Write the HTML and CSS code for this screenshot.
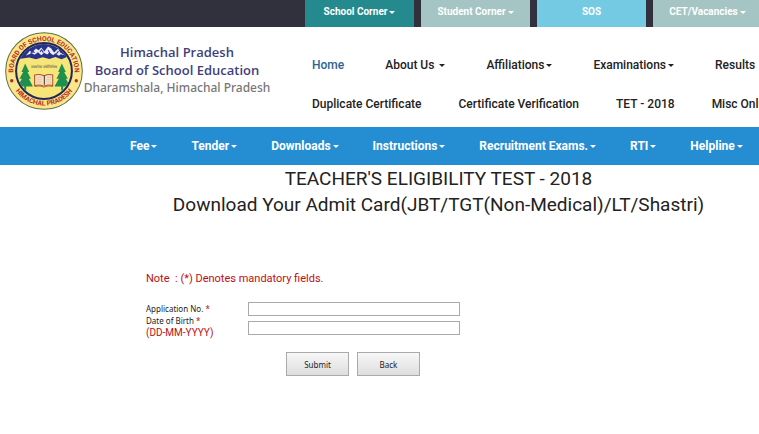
FILE: index.html
```
<!DOCTYPE html>
<html lang="en">
<head>
<meta charset="utf-8">
<title>Himachal Pradesh Board of School Education</title>
<link rel="stylesheet" href="styles.css">
</head>
<body>
<div class="topbar">
<a href="#" class="tab teal">School Corner<span class="caret"></span></a>
<a href="#" class="tab sage">Student Corner<span class="caret"></span></a>
<a href="#" class="tab sky">SOS</a>
<a href="#" class="tab sage">CET/Vacancies<span class="caret"></span></a>
</div>

<header class="header">
<a href="#" class="brand">
<svg class="logo" viewBox="0 0 232 232" role="img" aria-label="Board logo">
<defs>
<path id="arctop" d="M31 150 A91 91 0 1 1 201 150"/>
<path id="arcbottom" d="M12 128 A105 105 0 0 0 220 128"/>
<clipPath id="inner"><circle cx="116" cy="116" r="80"/></clipPath>
</defs>
<circle cx="116" cy="116" r="114" fill="#fbe68a" stroke="#5f7043" stroke-width="3"/>
<circle cx="116" cy="116" r="83" fill="#f6e678" stroke="#20285c" stroke-width="6"/>
<g clip-path="url(#inner)">
<path d="M30 30H202V80L184 74L168 81L150 74L132 80L112 75L92 81L72 76L30 82Z" fill="#29328a"/>
<path d="M62 70L74 56L80 61L92 49L100 54L108 46L117 58L128 43L137 48L146 61L158 50L164 61L178 69L166 66L160 71L150 63L143 69L132 60L126 67L116 62L108 69L98 60L88 68L80 63Z" fill="#e8ecf8"/>
<path d="M76 64L84 58L88 62M104 59L109 53L114 62M128 54L133 62M153 65L159 57" fill="none" stroke="#29328a" stroke-width="3"/>
<path d="M60 94L72 119H67L77 139H71L83 162H63V174H57V162H38L50 139H43L54 119H49Z" fill="#1e8f4c"/>
<path d="M169 94L181 119H176L187 139H181L194 162H173V174H167V162H147L160 139H153L163 119H158Z" fill="#1e8f4c"/>
<path d="M88 128Q101 124 116 130Q130 124 142 128V159Q129 155 116 161Q102 155 88 159Z" fill="#f7dfbd" stroke="#ad542c" stroke-width="3"/>
<path d="M88 162Q103 158 116 164Q129 158 142 162" fill="none" stroke="#c26a34" stroke-width="3"/>
<path d="M117 130V157" stroke="#3e3b3d" stroke-width="3"/>
<path d="M93 135H109M93 142H109M93 149H109M124 135H137M124 142H137M124 149H137" stroke="#e2b89b" stroke-width="2"/>
<text class="motto" x="116" y="107" text-anchor="middle">तमसो मा ज्योतिर्गमय</text>
</g>
<circle cx="20" cy="145" r="5" fill="#b02a20"/>
<circle cx="212" cy="145" r="5" fill="#b02a20"/>
<text class="ring"><textPath href="#arctop" startOffset="50%" text-anchor="middle">BOARD OF SCHOOL EDUCATION</textPath></text>
<text class="ring"><textPath href="#arcbottom" startOffset="50%" text-anchor="middle">HIMACHAL PRADESH</textPath></text>
</svg>
<span class="name">
<span class="title">Himachal Pradesh</span>
<span class="title">Board of School Education</span>
<span class="place">Dharamshala, Himachal Pradesh</span>
</span>
</a>
<nav class="mainnav">
<div class="row">
<a href="#" class="active">Home</a>
<a href="#">About Us <span class="caret"></span></a>
<a href="#">Affiliations<span class="caret"></span></a>
<a href="#">Examinations<span class="caret"></span></a>
<a href="#">Results</a>
</div>
<div class="row second">
<a href="#">Duplicate Certificate</a>
<a href="#">Certificate Verification</a>
<a href="#">TET - 2018</a>
<a href="#">Misc Online</a>
</div>
</nav>
</header>

<nav class="bluenav">
<a href="#">Fee<span class="caret"></span></a>
<a href="#">Tender<span class="caret"></span></a>
<a href="#">Downloads<span class="caret"></span></a>
<a href="#">Instructions<span class="caret"></span></a>
<a href="#">Recruitment Exams.<span class="caret"></span></a>
<a href="#">RTI<span class="caret"></span></a>
<a href="#">Helpline<span class="caret"></span></a>
</nav>

<main class="content">
<h1>TEACHER'S ELIGIBILITY TEST - 2018</h1>
<h1>Download Your Admit Card(JBT/TGT(Non-Medical)/LT/Shastri)</h1>
<form class="admit">
<p class="note">Note &nbsp;: (*) Denotes mandatory fields.</p>
<div class="fields">
<div class="labels">
<label for="appno">Application No. <span class="req">*</span></label>
<label for="dob">Date of Birth <span class="req">*</span><span class="format">(DD-MM-YYYY)</span></label>
</div>
<div class="inputs">
<input type="text" id="appno" name="appno">
<input type="text" id="dob" name="dob">
</div>
</div>
<div class="buttons">
<button type="submit">Submit</button>
<button type="button">Back</button>
</div>
</form>
</main>
</body>
</html>
```
FILE: styles.css
```
* {
  box-sizing: border-box;
}
body {
  margin: 0;
  background-color: #fff;
  font-family: Roboto, Arial, sans-serif;
  font-size: 12px;
  color: #222;
  overflow-x: hidden;
}
a {
  color: inherit;
  text-decoration: none;
  white-space: nowrap;
}
.caret {
  display: inline-block;
  margin-left: 2px;
  vertical-align: middle;
  border-top: 3px solid;
  border-left: 3px solid transparent;
  border-right: 3px solid transparent;
}
.topbar {
  display: flex;
  gap: 7px;
  height: 27px;
  padding-left: 305px;
  background-color: #31313d;
  overflow: hidden;
}
.tab {
  flex: 0 0 109px;
  color: #fff;
  font-size: 10px;
  font-weight: bold;
  line-height: 24px;
  text-align: center;
}
.teal {
  background-color: #248a8d;
}
.sage {
  background-color: #a4c5c4;
}
.sky {
  background-color: #74c9e3;
}
.header {
  display: flex;
  height: 100px;
  overflow: hidden;
}
.brand {
  display: flex;
  flex: 0 0 312px;
  padding: 5px 0 0 5px;
}
.logo {
  width: 78px;
  height: 78px;
}
.ring {
  font-family: Roboto, sans-serif;
  font-size: 20px;
  font-weight: bold;
  fill: #b5301e;
}
.motto {
  font-size: 11px;
  font-weight: bold;
  fill: #77704a;
}
.name {
  width: 188px;
  padding-top: 11px;
  font-family: "Noto Sans", sans-serif;
  font-size: 13px;
  font-weight: 500;
  line-height: 18px;
  text-align: center;
}
.name span {
  display: block;
}
.title {
  color: #3f3f7c;
  font-family: "Open Sans", sans-serif;
  font-weight: 600;
}
.place {
  color: #777;
  font-size: 12px;
}
.mainnav {
  padding-top: 19px;
  font-weight: 500;
}
.row {
  display: flex;
  gap: 41px;
  line-height: 39px;
}
.second {
  gap: 37px;
}
.active {
  color: #2b6593;
}
.bluenav {
  display: flex;
  gap: 34px;
  padding-left: 130px;
  background-color: #258dd2;
  color: #fff;
  font-weight: bold;
  line-height: 38px;
}
.content {
  padding: 1px 0 0 118px;
}
h1 {
  margin: 0;
  font-size: 19px;
  font-weight: normal;
  line-height: 26px;
  text-align: center;
}
.admit {
  padding: 54px 28px 0;
}
.note {
  margin: 0 0 16px;
  color: #c00d12;
  font-size: 11px;
  line-height: 14px;
}
.fields {
  display: flex;
}
.labels {
  width: 102px;
  padding-top: 1px;
  font-family: "Noto Sans", sans-serif;
  font-size: 8px;
  line-height: 12px;
}
.labels label {
  display: block;
}
.req {
  color: #c00d12;
}
.format {
  display: block;
  color: #c00d12;
  font-family: Roboto, sans-serif;
  font-size: 10px;
}
.inputs {
  display: grid;
  align-content: start;
  gap: 5px;
}
input {
  width: 212px;
  height: 14px;
  padding: 0 2px;
  border: 1px solid #aaa;
  font-size: 10px;
}
.buttons {
  display: flex;
  gap: 8px;
  padding: 13px 0 0 140px;
}
button {
  width: 63px;
  height: 24px;
  border: 1px solid #aaa;
  background: linear-gradient(#f7f7f7, #dedede);
  font-family: "Noto Sans", sans-serif;
  font-size: 8px;
  color: #222;
}
```
